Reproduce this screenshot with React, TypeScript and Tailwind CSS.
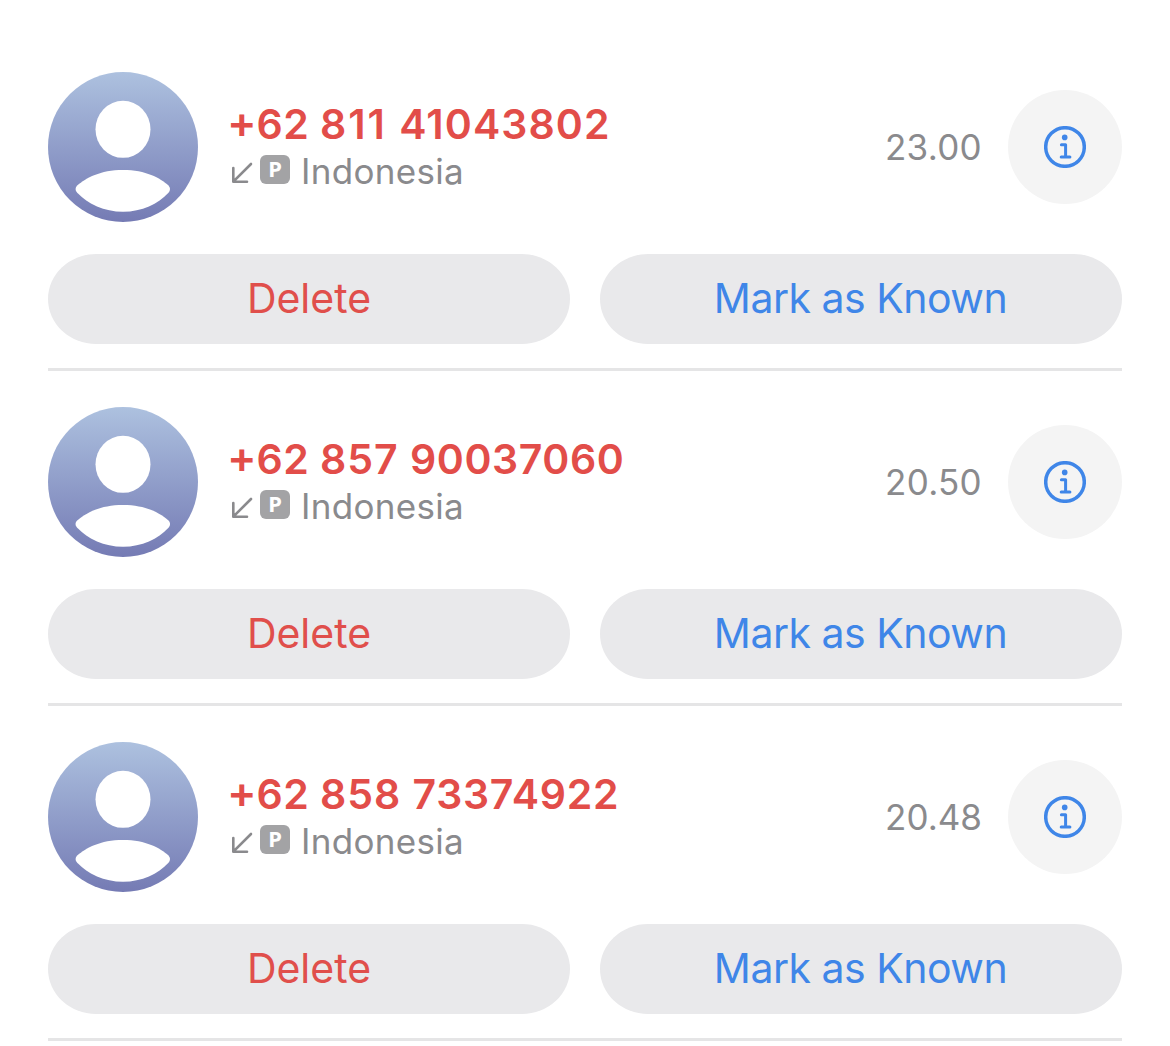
const CALLS = [
  { prefix: "62", area: "811", line: "41043802", areaTracking: "tracking-[2px]", lineTracking: "tracking-[1.1px]", timeTracking: "tracking-[0.3px]", region: "Indonesia", time: "23.00" },
  { prefix: "62", area: "857", line: "90037060", areaTracking: "tracking-[1px]", lineTracking: "tracking-[0.6px]", timeTracking: "tracking-[0.3px]", region: "Indonesia", time: "20.50" },
  { prefix: "62", area: "858", line: "73374922", areaTracking: "tracking-[1px]", lineTracking: "tracking-[0.7px]", timeTracking: "tracking-normal", region: "Indonesia", time: "20.48" },
]

function Avatar() {
  return (
    <div className="size-[150px] shrink-0 rounded-full bg-linear-to-b from-[#adc1df] to-[#757bb4]">
      <svg viewBox="0 0 150 150" className="size-full fill-white">
        <ellipse cx="75" cy="57.3" rx="27.5" ry="28.500" />
        <path d="M75 98C98 98 112 106 120.500 113.500C122.500 115.600 122.500 118.500 120.500 120.800C110 132 94 139.800 75 139.800C56 139.800 40 132 29.200 120.800C27 118.500 27 115.600 29.200 113.500C38 106 52 98 75 98Z" />
      </svg>
    </div>
  )
}

function IncomingArrow() {
  return (
    <svg viewBox="0 0 22 22" className="size-[22px] fill-none stroke-[#8a8a8d] stroke-[2.6]" strokeLinecap="round" strokeLinejoin="round">
      <path d="M20 2L2.300 19.700M2.300 6V19.700H16" />
    </svg>
  )
}

function InfoIcon() {
  return (
    <svg viewBox="0 0 42 42" className="size-[42px] fill-none stroke-[#3f86e8]" strokeLinecap="round" strokeLinejoin="round">
      <circle cx="21" cy="21" r="19.300" strokeWidth="3.500" />
      <circle cx="20.700" cy="11.400" r="2.800" className="fill-[#3f86e8] stroke-none" />
      <path d="M17.400 18.700H21.600V30.900M17.200 30.900H25.900" strokeWidth="3" />
    </svg>
  )
}

export default function App() {
  return (
    <main className="h-[1046px] overflow-hidden bg-white px-12 pt-9 font-['Inter','Liberation_Sans',sans-serif]">
      {CALLS.map((call) => (
        <article key={call.line} className="border-b-[3px] border-[#e5e5e6] pt-9 pb-6">
          <div className="flex h-[150px] items-center">
            <Avatar />
            <div className="ml-[30px] flex-1">
              <h2 className="h-12 text-[41px] leading-[46px] font-semibold whitespace-nowrap text-[#e24d49]">
                <span className="-ml-px align-[1px] text-[44px] leading-none">+</span>
                <span className="tracking-[0.4px]">{call.prefix} </span>
                <span className={call.areaTracking}>{call.area} </span>
                <span className={call.lineTracking}>{call.line}</span>
              </h2>
              <div className="flex h-[46px] items-center text-[#8a8a8d]">
                <div className="mt-1 ml-[3px]">
                  <IncomingArrow />
                </div>
                <span className="mb-1 ml-[7px] flex h-[29px] w-[30px] items-center justify-center rounded-md bg-[#a3a3a5] pb-0.5 font-['Noto_Sans',sans-serif] text-[22px] leading-none font-bold text-white">
                  P
                </span>
                <span className="ml-[11px] text-[35px] leading-[46px] tracking-[0.3px]">{call.region}</span>
              </div>
            </div>
            <time className={`text-[35px] leading-none text-[#8a8a8d] ${call.timeTracking}`}>{call.time}</time>
            <button aria-label="Call details" className="ml-[26px] flex size-[114px] items-center justify-center rounded-full bg-[#f4f4f4]">
              <InfoIcon />
            </button>
          </div>
          <div className="mt-8 grid grid-cols-2 gap-[30px] text-[41px] leading-none">
            <button className="h-[90px] rounded-[48px/45px] bg-[#e9e9eb] pb-0.5 text-[#e04f4b]">Delete</button>
            <button className="h-[90px] rounded-[48px/45px] bg-[#e9e9eb] pr-px pb-0.5 tracking-[-0.5px] text-[#3f86e8]">Mark as Known</button>
          </div>
        </article>
      ))}
    </main>
  )
}
